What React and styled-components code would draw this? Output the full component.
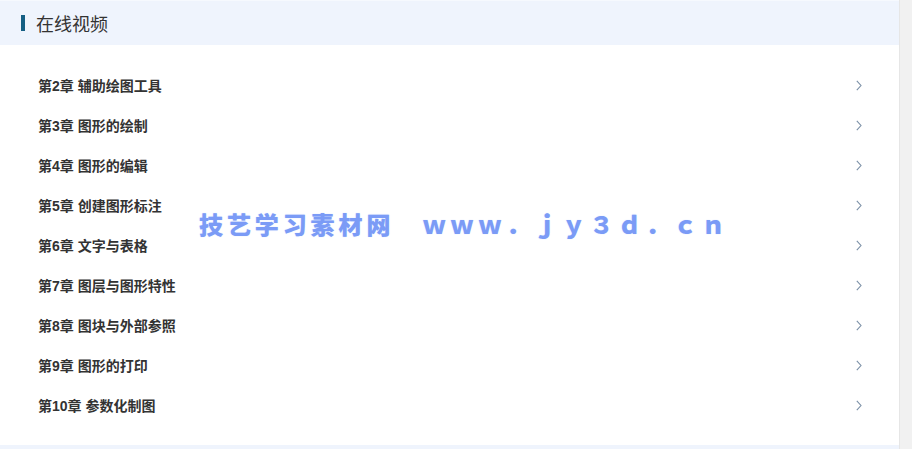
import React from "react";
import styled, { createGlobalStyle } from "styled-components";

const Global = createGlobalStyle`
  html, body { margin: 0; padding: 0; }
  body {
    background: #eff4fd;
    font-family: "Liberation Sans", "Noto Sans CJK SC", sans-serif;
    overflow: hidden;
  }
`;

const Page = styled.div`
  position: relative;
  display: flex;
  width: 912px;
  height: 449px;
`;

const Main = styled.div`
  flex: 1;
  display: flex;
  flex-direction: column;
  border-top: 1px solid #f6f9fe;
  background: #eff4fd;
`;

const Header = styled.div`
  height: 44px;
  display: flex;
  align-items: center;
  padding-left: 21px;
  gap: 11px;
`;

const Bar = styled.span`
  width: 4px;
  height: 16px;
  background: #155f84;
`;

const Title = styled.h2`
  margin: 0;
  font-size: 18px;
  font-weight: normal;
  color: #333;
  font-family: "Noto Sans CJK SC", sans-serif;
  line-height: 1;
`;

const List = styled.ul`
  list-style: none;
  margin: 0;
  padding: 20px 0 20px;
  background: #fff;
  height: 360px;
`;

const Row = styled.li`
  height: 40px;
  display: flex;
  align-items: center;
  justify-content: space-between;
  padding: 0 37px 0 38px;
  font-size: 14px;
  font-weight: bold;
  color: #333;
`;

const Scroll = styled.div`
  width: 12px;
  background: #f1f1f1;
  border-left: 1px solid #e6e6e6;
`;

const Watermark = styled.div`
  position: absolute;
  left: 199px;
  top: 206px;
  font-family: "Noto Sans CJK SC", sans-serif;
  font-weight: 900;
  font-size: 24px;
  letter-spacing: 3.9px;
  color: #7b9bf6;
  white-space: nowrap;
  text-shadow: 0 0 1px rgba(170, 195, 255, 0.8);
  pointer-events: none;
`;

const Chevron = () => (
  <svg width="6" height="11" viewBox="0 0 6 11">
    <polyline points="0.8,0.8 5,5.5 0.8,10.2" fill="none" stroke="#7a8fa6" strokeWidth="1.1" />
  </svg>
);

const chapters = [
  "第2章 辅助绘图工具",
  "第3章 图形的绘制",
  "第4章 图形的编辑",
  "第5章 创建图形标注",
  "第6章 文字与表格",
  "第7章 图层与图形特性",
  "第8章 图块与外部参照",
  "第9章 图形的打印",
  "第10章 参数化制图",
];

export default function App() {
  return (
    <>
      <Global />
      <Page>
        <Main>
          <Header>
            <Bar />
            <Title>在线视频</Title>
          </Header>
          <List>
            {chapters.map((c) => (
              <Row key={c}>
                <span>{c}</span>
                <Chevron />
              </Row>
            ))}
          </List>
        </Main>
        <Scroll />
        <Watermark>技艺学习素材网　ｗｗｗ．ｊｙ３ｄ．ｃｎ</Watermark>
      </Page>
    </>
  );
}
